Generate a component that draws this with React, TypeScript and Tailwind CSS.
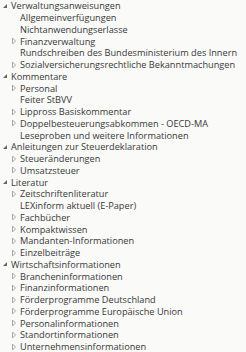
import React from "react";

type Node = { label: string; level: number; state: "open" | "closed" | "leaf" };

const rows: Node[] = [
  { label: "Verwaltungsanweisungen", level: 0, state: "open" },
  { label: "Allgemeinverfügungen", level: 1, state: "leaf" },
  { label: "Nichtanwendungserlasse", level: 1, state: "leaf" },
  { label: "Finanzverwaltung", level: 1, state: "closed" },
  { label: "Rundschreiben des Bundesministerium des Innern", level: 1, state: "leaf" },
  { label: "Sozialversicherungsrechtliche Bekanntmachungen", level: 1, state: "closed" },
  { label: "Kommentare", level: 0, state: "open" },
  { label: "Personal", level: 1, state: "closed" },
  { label: "Feiter StBVV", level: 1, state: "leaf" },
  { label: "Lippross Basiskommentar", level: 1, state: "closed" },
  { label: "Doppelbesteuerungsabkommen - OECD-MA", level: 1, state: "closed" },
  { label: "Leseproben und weitere Informationen", level: 1, state: "leaf" },
  { label: "Anleitungen zur Steuerdeklaration", level: 0, state: "open" },
  { label: "Steueränderungen", level: 1, state: "closed" },
  { label: "Umsatzsteuer", level: 1, state: "closed" },
  { label: "Literatur", level: 0, state: "open" },
  { label: "Zeitschriftenliteratur", level: 1, state: "closed" },
  { label: "LEXinform aktuell (E-Paper)", level: 1, state: "leaf" },
  { label: "Fachbücher", level: 1, state: "closed" },
  { label: "Kompaktwissen", level: 1, state: "closed" },
  { label: "Mandanten-Informationen", level: 1, state: "closed" },
  { label: "Einzelbeiträge", level: 1, state: "closed" },
  { label: "Wirtschaftsinformationen", level: 0, state: "open" },
  { label: "Brancheninformationen", level: 1, state: "closed" },
  { label: "Finanzinformationen", level: 1, state: "closed" },
  { label: "Förderprogramme Deutschland", level: 1, state: "closed" },
  { label: "Förderprogramme Europäische Union", level: 1, state: "closed" },
  { label: "Personalinformationen", level: 1, state: "closed" },
  { label: "Standortinformationen", level: 1, state: "closed" },
  { label: "Unternehmensinformationen", level: 1, state: "closed" },
];

function Toggle({ state }: { state: Node["state"] }) {
  if (state === "open")
    return (
      <svg width="6" height="6" viewBox="0 0 6 6" className="shrink-0">
        <polygon points="5,1 5,5 1,5" fill="#666666" />
      </svg>
    );
  if (state === "closed")
    return (
      <svg width="6" height="8" viewBox="0 0 6 8" className="shrink-0">
        <polygon points="1.5,1 4.5,4 1.5,7" fill="none" stroke="#a8a8a8" strokeWidth="1" />
      </svg>
    );
  return <span className="w-[6px] shrink-0" />;
}

export default function App() {
  return (
    <div className="w-[246px] h-[352px] bg-[#fafaf9] overflow-hidden text-[#383838] font-['Open_Sans',sans-serif] text-[9.2px]">
      {rows.map((r, i) => (
        <div
          key={i}
          className={`flex items-center h-[11.75px] whitespace-nowrap ${r.level === 0 ? "pl-[2px]" : "pl-[11px]"}`}
        >
          <Toggle state={r.state} />
          <span className="ml-[3px] leading-none">{r.label}</span>
        </div>
      ))}
    </div>
  );
}
